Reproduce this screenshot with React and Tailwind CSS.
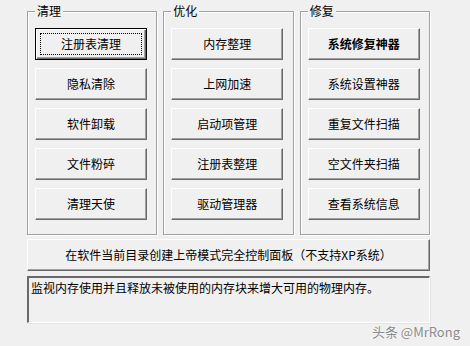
const GROUPS = [
  { title: '清理', items: ['注册表清理', '隐私清除', '软件卸载', '文件粉碎', '清理天使'] },
  { title: '优化', items: ['内存整理', '上网加速', '启动项管理', '注册表整理', '驱动管理器'] },
  { title: '修复', items: ['系统修复神器', '系统设置神器', '重复文件扫描', '空文件夹扫描', '查看系统信息'] },
]

const FONT = "font-['SimSun','Noto_Sans_CJK_SC',sans-serif]"

function WinButton({ label, focused = false, bold = false, className = '' }) {
  return (
    <button
      className={
        'relative flex items-center justify-center bg-[#f0f0f0] text-[12px] text-black leading-none ' +
        (focused
          ? 'border border-black shadow-[inset_1px_1px_0_#fff,inset_-1px_-1px_0_#696969,inset_-2px_-2px_0_#a0a0a0] '
          : 'border border-t-white border-l-white border-r-[#696969] border-b-[#696969] shadow-[inset_-1px_-1px_0_#a0a0a0] ') +
        (bold ? 'font-bold ' : '') +
        className
      }
    >
      {focused && <span className="absolute inset-[4px] border border-dotted border-black" />}
      {label}
    </button>
  )
}

function GroupBox({ title, children }) {
  return (
    <div className="relative border border-[#a0a0a0] shadow-[1px_1px_0_#fff,inset_1px_1px_0_#fff] pl-[7px] pr-[10px] pt-[16px] pb-[14px]">
      <span className="absolute -top-[9px] left-[7px] bg-[#f0f0f0] px-[2px] text-[12px] leading-[16px] text-black">
        {title}
      </span>
      {children}
    </div>
  )
}

export default function App() {
  return (
    <div className={`relative w-[470px] h-[346px] bg-[#f0f0f0] ${FONT} overflow-hidden`}>
      <div className="pl-[27px] pr-[40px] pt-[11px]">
        {/* Groups */}
        <div className="grid grid-cols-3 gap-[6px]">
          {GROUPS.map((group, gi) => (
            <GroupBox key={group.title} title={group.title}>
              <div className="flex flex-col gap-[8px]">
                {group.items.map((item, ii) => (
                  <WinButton
                    key={item}
                    label={item}
                    focused={gi === 0 && ii === 0}
                    bold={gi === 2 && ii === 0}
                    className="w-[112px] h-[32px]"
                  />
                ))}
              </div>
            </GroupBox>
          ))}
        </div>

        {/* Wide button */}
        <WinButton
          label="在软件当前目录创建上帝模式完全控制面板（不支持XP系统）"
          className="mt-[4px] w-full h-[32px]"
        />

        {/* Description box */}
        <div className="mt-[5px] h-[47px] border-t-2 border-l-2 border-t-[#696969] border-l-[#696969] border-r border-b border-r-white border-b-white shadow-[1px_1px_0_#e3e3e3] px-[2px] pt-[3px] text-[12px] leading-[14px] text-black">
          监视内存使用并且释放未被使用的内存块来增大可用的物理内存。
        </div>
      </div>

      {/* Watermark */}
      <span className="absolute right-[10px] bottom-[8px] font-['Noto_Sans_CJK_SC',sans-serif] text-[13px] leading-none text-[#8a8a8a] [text-shadow:0_0_2px_#fff]">
        头条 @MrRong
      </span>
    </div>
  )
}
